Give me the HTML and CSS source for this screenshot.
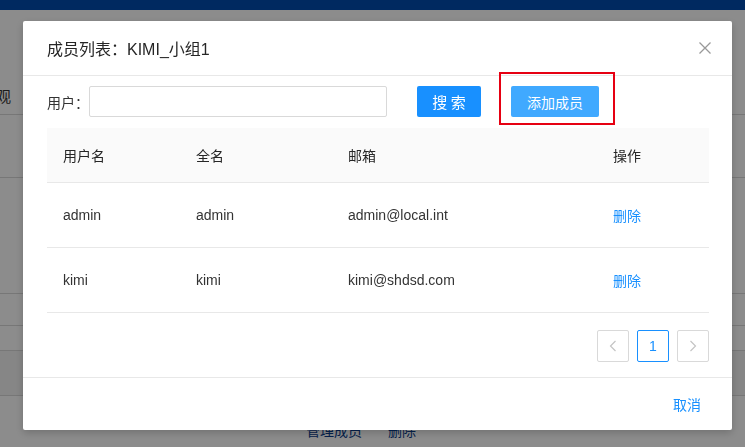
FILE: index.html
```html
<html lang="zh-CN"><head>
    <meta charset="UTF-8">
    <meta name="viewport" content="width=device-width, initial-scale=1.0">
    <title>成员列表</title>
    <link rel="stylesheet" href="styles.css">
</head>
<body>
    <!-- 背后的页面 -->
    <div class="page">
        <div class="topbar"></div>
        <div class="tabs"><span class="tab_txt zh">观</span></div>
        <div class="bg_row h63"></div>
        <div class="bg_row h116"></div>
        <div class="bg_row h32"></div>
        <div class="bg_row h25"></div>
        <div class="bg_row h45 shade"></div>
        <div class="bg_links zh"><span>管理成员</span><span>删除</span></div>
    </div>

    <div class="mask"></div>

    <div class="modal">
        <div class="modal_head">
            <span class="modal_title">成员列表：KIMI_小组1</span>
            <svg class="close" width="12" height="12" viewBox="0 0 12 12">
                <path d="M0.5 0.5 L11.5 11.5 M11.5 0.5 L0.5 11.5" stroke="#999" stroke-width="1.3" fill="none"/>
            </svg>
        </div>

        <div class="modal_body">
            <div class="search_row">
                <label class="lbl zh">用户：</label>
                <input class="txt" type="text">
                <button class="btn btn_search zh">搜 索</button>
                <span class="mark"><button class="btn btn_add zh">添加成员</button></span>
            </div>

            <div class="tbl">
                <div class="tr th zh">
                    <div class="td">用户名</div>
                    <div class="td">全名</div>
                    <div class="td">邮箱</div>
                    <div class="td">操作</div>
                </div>
                <div class="tr">
                    <div class="td">admin</div>
                    <div class="td">admin</div>
                    <div class="td">admin@local.int</div>
                    <div class="td zh"><a class="link">删除</a></div>
                </div>
                <div class="tr">
                    <div class="td">kimi</div>
                    <div class="td">kimi</div>
                    <div class="td">kimi@shdsd.com</div>
                    <div class="td zh"><a class="link">删除</a></div>
                </div>
            </div>

            <div class="pager">
                <span class="pg dis">
                    <svg width="8" height="12" viewBox="0 0 8 12"><path d="M6.5 1 L1.5 6 L6.5 11" stroke="#c4c4c4" stroke-width="1.2" fill="none"/></svg>
                </span>
                <span class="pg cur">1</span>
                <span class="pg dis">
                    <svg width="8" height="12" viewBox="0 0 8 12"><path d="M1.5 1 L6.5 6 L1.5 11" stroke="#c4c4c4" stroke-width="1.2" fill="none"/></svg>
                </span>
            </div>
        </div>

        <div class="modal_foot zh">
            <a class="link cancel">取消</a>
        </div>
    </div>
</body></html>
```

FILE: styles.css
```css
* {
    box-sizing: border-box;
}
body {
    margin: 0;
    width: 745px;
    height: 447px;
    overflow: hidden;
    background: #fff;
    font-family: "Liberation Sans", "Noto Sans CJK SC", sans-serif;
    font-size: 14px;
    color: #333;
}
/* 只有中文的地方 */
.zh {
    font-family: "Noto Sans CJK SC", sans-serif;
}

/* 背景页面 */
.page {
    width: 745px;
}
.topbar {
    height: 10px;
    background: #004caf;
}
.tabs {
    height: 105px;
    border-bottom: 1px solid #d9d9d9;
    padding-top: 75px;
}
.tab_txt {
    margin-left: -4px;
    font-size: 15px;
    color: #333;
}
.bg_row {
    border-bottom: 1px solid #d9d9d9;
}
.h63 { height: 63px; }
.h116 { height: 116px; }
.h32 { height: 32px; }
.h25 { height: 25px; }
.h45 { height: 45px; }
.shade { background: #f4f4f4; }
.bg_links {
    padding: 24px 0 0 306px;
    display: flex;
    gap: 26px;
    color: #0a3c8c;
    font-size: 14px;
}

/* 遮罩 */
.mask {
    position: fixed;
    left: 0;
    top: 0;
    width: 100%;
    height: 100%;
    background: rgba(0, 0, 0, 0.45);
}

.modal {
    position: fixed;
    left: 23px;
    top: 21px;
    width: 709px;
    height: 409px;
    background: #fff;
    border-radius: 2px;
    box-shadow: 0 3px 8px rgba(0, 0, 0, 0.2);
    display: flex;
    flex-direction: column;
}
.modal_head {
    height: 55px;
    border-bottom: 1px solid #e8e8e8;
    display: flex;
    align-items: center;
    justify-content: space-between;
    padding: 0 21px 0 24px;
}
.modal_title {
    font-size: 16px;
    color: #262626;
}
.modal_body {
    padding: 10px 23px 0 24px;
    flex: 1;
}
.search_row {
    display: flex;
    align-items: center;
    height: 31px;
}
.lbl {
    width: 42px;
    color: #333;
}
.txt {
    width: 298px;
    height: 31px;
    border: 1px solid #d9d9d9;
    border-radius: 2px;
    outline: none;
}
.btn {
    height: 31px;
    border: none;
    border-radius: 2px;
    color: #fff;
    font-size: 14px;
}
.btn_search {
    margin-left: 30px;
    width: 64px;
    background: #1890ff;
    font-size: 15px;
}
/* 红框标注 */
.mark {
    position: relative;
    margin-left: 30px;
    display: flex;
}
.mark::after {
    content: "";
    position: absolute;
    left: -12px;
    top: -14px;
    right: -16px;
    bottom: -8px;
    border: 2px solid #e60012;
}
.btn_add {
    width: 88px;
    background: #40a9ff;
}

.tbl {
    margin-top: 11px;
}
.tr {
    display: grid;
    grid-template-columns: 133px 152px 265px 1fr;
    height: 65px;
    align-items: center;
    border-bottom: 1px solid #e8e8e8;
}
.th {
    height: 55px;
    background: #fafafa;
    color: #262626;
}
.td {
    padding-left: 16px;
}
.link {
    color: #1890ff;
    cursor: pointer;
}

.pager {
    display: flex;
    justify-content: flex-end;
    gap: 8px;
    margin-top: 17px;
}
.pg {
    width: 32px;
    height: 32px;
    border: 1px solid #d9d9d9;
    border-radius: 2px;
    display: flex;
    align-items: center;
    justify-content: center;
    color: #1890ff;
}
.pg.cur {
    border-color: #1890ff;
}

.modal_foot {
    height: 53px;
    border-top: 1px solid #e8e8e8;
    display: flex;
    align-items: center;
    justify-content: flex-end;
    padding-right: 31px;
}
```
